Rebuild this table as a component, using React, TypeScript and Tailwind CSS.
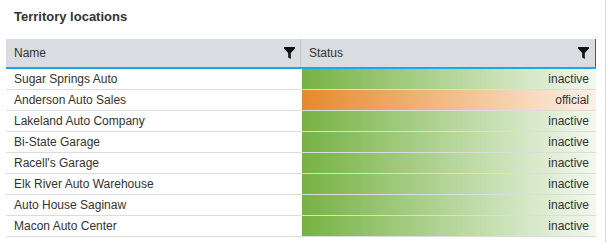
import React from "react";

type Row = { name: string; status: "inactive" | "official" };

const rows: Row[] = [
  { name: "Sugar Springs Auto", status: "inactive" },
  { name: "Anderson Auto Sales", status: "official" },
  { name: "Lakeland Auto Company", status: "inactive" },
  { name: "Bi-State Garage", status: "inactive" },
  { name: "Racell's Garage", status: "inactive" },
  { name: "Elk River Auto Warehouse", status: "inactive" },
  { name: "Auto House Saginaw", status: "inactive" },
  { name: "Macon Auto Center", status: "inactive" },
];

function Funnel() {
  return (
    <svg width="11" height="12" viewBox="0 0 11 12" className="shrink-0">
      <path d="M0 0H11V1.5L6.8 6V12L4.2 10.5V6L0 1.5Z" fill="#111" />
    </svg>
  );
}

export default function App() {
  return (
    <div
      className="w-[608px] h-[242px] bg-white overflow-hidden text-[#333]"
      style={{ fontFamily: '"Liberation Sans", Arial, sans-serif' }}
    >
      <div className="w-[606px] h-full border-r border-[#d4d4d4]">
        <div className="pl-[14px] pt-[7px] h-[39px] text-[13px] font-bold text-[#333]">
          Territory locations
        </div>
        <div className="ml-[6px] w-[590px]">
          <div className="flex h-[30px] bg-[#d9dce1] border-b-2 border-[#1ea6e6] text-[12px]">
            <div className="w-[295px] flex items-center justify-between pl-[8px] pr-[5px] border-r border-[#c3c6ca]">
              <span>Name</span>
              <Funnel />
            </div>
            <div className="flex-1 flex items-center justify-between pl-[8px] pr-[6px] border-r border-[#555]">
              <span>Status</span>
              <Funnel />
            </div>
          </div>
          {rows.map((r) => (
            <div key={r.name} className="flex h-[21px] border-b border-[#dcdcdc] text-[12px]">
              <div className="w-[296px] flex items-center pl-[8px]">{r.name}</div>
              <div
                className={
                  "flex-1 flex items-center justify-end pr-[7px] " +
                  (r.status === "official"
                    ? "bg-[linear-gradient(to_right,#e6892c,#fcf0e6)]"
                    : "bg-[linear-gradient(to_right,#77b244,#f2f8ee)]")
                }
              >
                {r.status}
              </div>
            </div>
          ))}
        </div>
      </div>
    </div>
  );
}
